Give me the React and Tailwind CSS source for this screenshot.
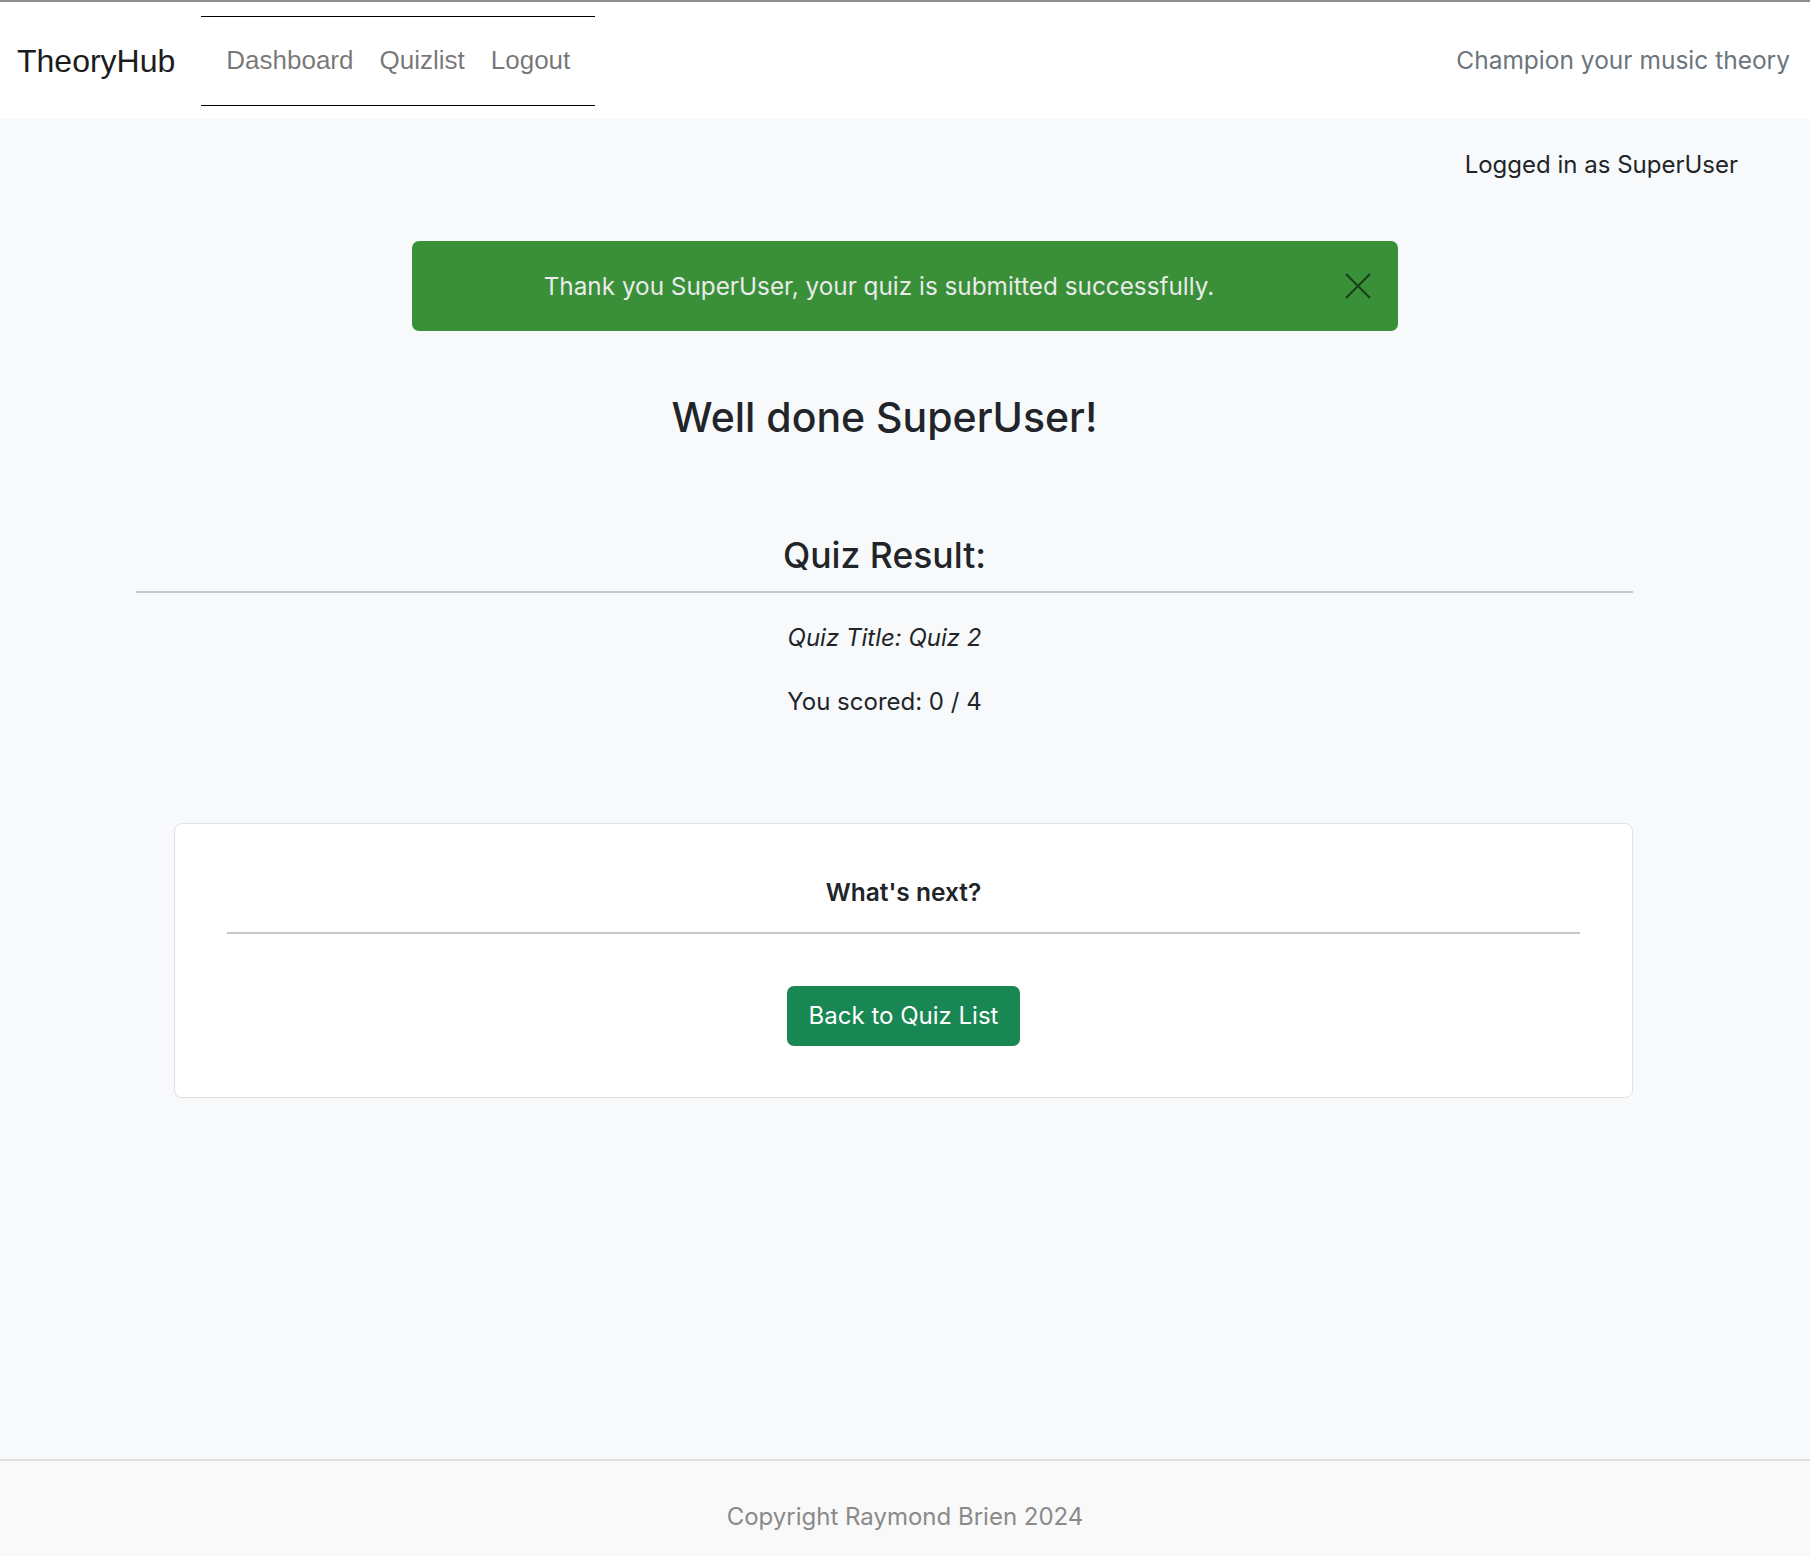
import React from 'react'

const sans = { fontFamily: 'Inter, "Noto Sans", sans-serif' }

function Navbar() {
  return (
    <nav className="flex h-[119px] items-center border-t-2 border-[#8f8f8f] bg-white">
      <a className="pl-[17px] text-[32px] text-[#1c1c1c] [font-family:'Liberation_Sans',Arial,sans-serif]">
        TheoryHub
      </a>
      <ul className="ml-[26px] flex h-[90px] items-center border-y border-black px-[12px] text-[26px] text-black/55 [font-family:'Liberation_Sans',Arial,sans-serif]">
        <li className="px-[13px]">Dashboard</li>
        <li className="px-[13px]">Quizlist</li>
        <li className="px-[13px]">Logout</li>
      </ul>
      <p className="ml-auto pr-[20px] text-[24.5px] text-[#6c757d]">Champion your music theory</p>
    </nav>
  )
}

function CloseIcon() {
  return (
    <svg width="26" height="26" viewBox="0 0 26 26" fill="none">
      <path d="M1 1L25 25M25 1L1 25" stroke="black" strokeOpacity="0.55" strokeWidth="2.2" />
    </svg>
  )
}

export default function App() {
  return (
    <div className="flex min-h-[1556px] flex-col bg-[#f8f9fa] text-[#212529]" style={sans}>
      <Navbar />

      <main className="flex-1">
        <p className="pr-[72px] pt-[28px] text-right text-[24px] leading-[36px]">Logged in as SuperUser</p>

        {/* flash message */}
        <div className="relative mx-auto mt-[58px] flex h-[90px] w-[986px] items-center rounded-[7px] bg-[#3a8f39] pl-[26px] pr-[78px]">
          <p className="w-full text-center text-[24.3px] text-[#e8ebe8]">
            Thank you SuperUser, your quiz is submitted successfully.
          </p>
          <button className="absolute right-[27px] top-[32px]">
            <CloseIcon />
          </button>
        </div>

        {/* result */}
        <section className="ml-[136px] w-[1497px] text-center">
          <h3 className="mt-[61px] text-[41px] font-medium leading-[50px]">Well done SuperUser!</h3>
          <h4 className="mt-[92px] text-[35.5px] font-medium leading-[44px]">Quiz Result:</h4>
          <hr className="mt-[13px] border-t-2 border-[#c7c8c9]" />
          <p className="mt-[27px] text-[24px] italic leading-[36px]">Quiz Title: Quiz 2</p>
          <p className="mt-[28px] text-[24px] leading-[36px]">You scored: 0 / 4</p>
        </section>

        {/* what's next card */}
        <div className="ml-[174px] mt-[103px] w-[1459px] rounded-[8px] border border-[#dfe1e3] bg-white px-[52px] pb-[51px] pt-[50px] text-center">
          <h5 className="text-[24.5px] font-semibold leading-[36px]">What's next?</h5>
          <hr className="mt-[22px] border-t-2 border-[#c7c8c9]" />
          <button className="mt-[52px] h-[60px] rounded-[7px] bg-[#198754] px-[22px] text-[24px] text-white">
            Back to Quiz List
          </button>
        </div>
      </main>

      <footer className="h-[97px] border-t-2 border-[#dedede] bg-[#f9f9f9] pt-[38px] text-center text-[24px] leading-[36px] text-[#8a8a8a]">
        Copyright Raymond Brien 2024
      </footer>
    </div>
  )
}
